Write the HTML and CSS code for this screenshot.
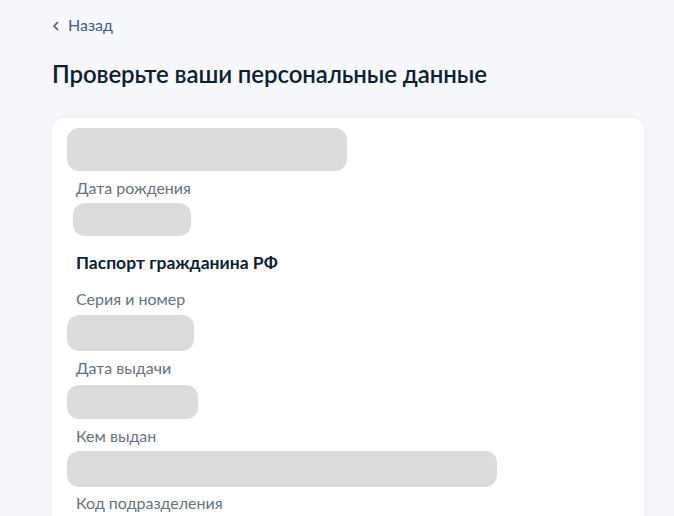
FILE: index.html
```html
<!DOCTYPE html>
<html lang="ru">
<head>
<meta charset="utf-8">
<link rel="stylesheet" href="styles.css">
</head>
<body>
<div class="page">
  <a class="back" href="#">
    <svg class="chev" width="8" height="10" viewBox="0 0 8 10"><path d="M5.5 1.5 L2 5 L5.5 8.5" fill="none" stroke="currentColor" stroke-width="1.7" stroke-linecap="round" stroke-linejoin="round"/></svg>
    <span>Назад</span>
  </a>
  <h1 class="title">Проверьте ваши персональные данные</h1>
  <div class="card">
    <div class="blk blk-name"></div>
    <div class="label l-birth">Дата рождения</div>
    <div class="blk blk-birth"></div>
    <div class="section">Паспорт гражданина РФ</div>
    <div class="label l-series">Серия и номер</div>
    <div class="blk blk-series"></div>
    <div class="label">Дата выдачи</div>
    <div class="blk blk-date"></div>
    <div class="label">Кем выдан</div>
    <div class="blk blk-issuer"></div>
    <div class="label l-code">Код подразделения</div>
    <div class="blk blk-code"></div>
  </div>
</div>
</body>
</html>
```
FILE: styles.css
```css
html, body {
  margin: 0;
  padding: 0;
  background: #f6f8fb;
  font-family: Lato, "Noto Sans", sans-serif;
  overflow: hidden;
  height: 516px;
}
.page {
  padding: 15px 30px 0 52px;
  display: flex;
  flex-direction: column;
}
.back {
  display: flex;
  align-items: center;
  gap: 8px;
  color: #3f5a94;
  text-decoration: none;
  font-size: 16px;
  line-height: 20px;
  align-self: flex-start;
}
.chev { display: block; margin-top: 1px; }
.title {
  margin: 23px 0 0;
  font-size: 24px;
  line-height: 32px;
  font-weight: 600;
  letter-spacing: -0.1px;
  color: #0b1f33;
}
.card {
  margin-top: 28px;
  background: #fff;
  border-radius: 12px;
  box-shadow: 0 0 6px rgba(40, 60, 100, 0.06);
  padding: 10px 15px 40px;
  display: flex;
  flex-direction: column;
  align-items: flex-start;
}
.blk {
  background: #dcdcdc;
  border-radius: 12px;
  margin-top: 7px;
}
.blk-name { width: 280px; height: 43px; margin-top: 0; }
.blk-birth { width: 118px; height: 33px; margin-left: 6px; margin-top: 5px; }
.blk-series { width: 127px; height: 36px; margin-top: 6px; }
.blk-date { width: 131px; height: 34px; }
.blk-issuer { width: 430px; height: 36px; margin-top: 5px; }
.blk-code { width: 90px; height: 34px; margin-top: 6px; }
.label {
  margin-left: 9px;
  margin-top: 7px;
  font-size: 16px;
  line-height: 20px;
  color: #66727f;
}
.l-code { margin-top: 6px; }
.section {
  margin: 16px 0 0 9px;
  font-size: 17.5px;
  line-height: 22px;
  font-weight: 700;
  color: #0b1f33;
}
.label.l-series { margin-top: 15px; }
```
